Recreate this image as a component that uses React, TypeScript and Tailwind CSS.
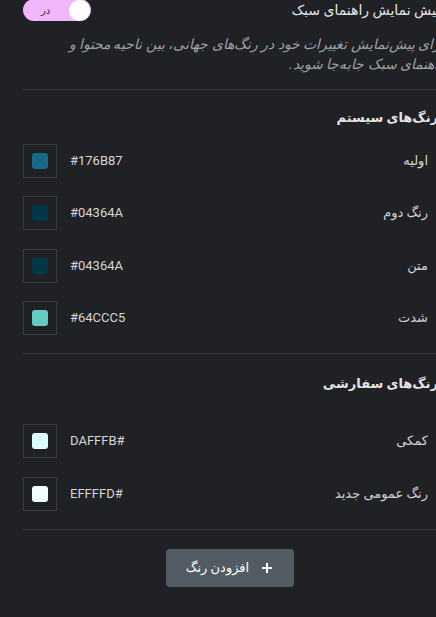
import React from "react";

const font = { fontFamily: "Roboto, 'DejaVu Sans', sans-serif" };

function Swatch({ color }: { color: string }) {
  return (
    <div className="w-[34px] h-[34px] border border-[#3a3b3f] flex items-center justify-center shrink-0">
      <div className="w-[16px] h-[16px] rounded-[3px]" style={{ backgroundColor: color }} />
    </div>
  );
}

function Row({ label, hex, color }: { label: string; hex: string; color: string }) {
  return (
    <div className="flex items-center justify-between h-[34px]">
      <div className="text-[13px] text-[#d0d2d5] mr-[13px]">{label}</div>
      <div dir="ltr" className="flex items-center gap-[13px]">
        <Swatch color={color} />
        <span className="text-[13px] text-[#d5d7da]">{hex}</span>
      </div>
    </div>
  );
}

export default function App() {
  return (
    <div className="w-[436px] h-[617px] overflow-hidden bg-[#202124]" style={font}>
      <div className="pl-[23px]">
        <div dir="rtl" className="w-[418px]">
          <div className="flex items-center justify-between h-[22px] -mt-[1px]">
            <div className="text-[14px] text-[#e3e5e8] mr-[1px]">پیش نمایش راهنمای سبک</div>
            <div className="w-[68px] h-[22px] rounded-full bg-[#f0b8fa] flex items-center justify-between px-[1px]">
              <div className="w-[21px] h-[21px] rounded-full bg-white" />
              <span className="text-[10px] text-[#3a2b40] ml-[17px]">در</span>
            </div>
          </div>
          <div className="mt-[13px] text-[14px] leading-[20px] text-[#9aa0a6] italic pl-[2px] -mr-[4px]">
            برای پیش‌نمایش تغییرات خود در رنگ‌های جهانی، بین ناحیه محتوا و راهنمای سبک جابه‌جا شوید.
          </div>
          <div className="mt-[15px] h-px bg-[#36373a]" />
          <div className="mt-[18px] text-[13px] font-bold text-[#e3e5e8] mr-[3px]">رنگ‌های سیستم</div>
          <div className="mt-[16px] flex flex-col gap-[18.5px]">
            <Row label="اولیه" hex="#176B87" color="#176B87" />
            <Row label="رنگ دوم" hex="#04364A" color="#04364A" />
            <Row label="متن" hex="#04364A" color="#04364A" />
            <Row label="شدت" hex="#64CCC5" color="#64CCC5" />
          </div>
          <div className="mt-[18px] h-px bg-[#36373a]" />
          <div className="mt-[20px] text-[13px] font-bold text-[#e3e5e8] mr-[3px]">رنگ‌های سفارشی</div>
          <div className="mt-[30px] flex flex-col gap-[19.5px]">
            <Row label="کمکی" hex="DAFFFB#" color="#DAFFFB" />
            <Row label="رنگ عمومی جدید" hex="EFFFFD#" color="#EFFFFD" />
          </div>
          <div className="mt-[18px] h-px bg-[#36373a]" />
          <div className="mt-[19px] flex justify-center mr-[5px]">
            <button className="w-[128px] h-[38px] rounded-[4px] bg-[#535b63] flex items-center justify-center gap-[12px] text-[13px] text-white">
              <svg width="12" height="12" viewBox="0 0 12 12">
                <path d="M6 1v10M1 6h10" stroke="white" strokeWidth="2" />
              </svg>
              <span>افزودن رنگ</span>
            </button>
          </div>
        </div>
      </div>
    </div>
  );
}
